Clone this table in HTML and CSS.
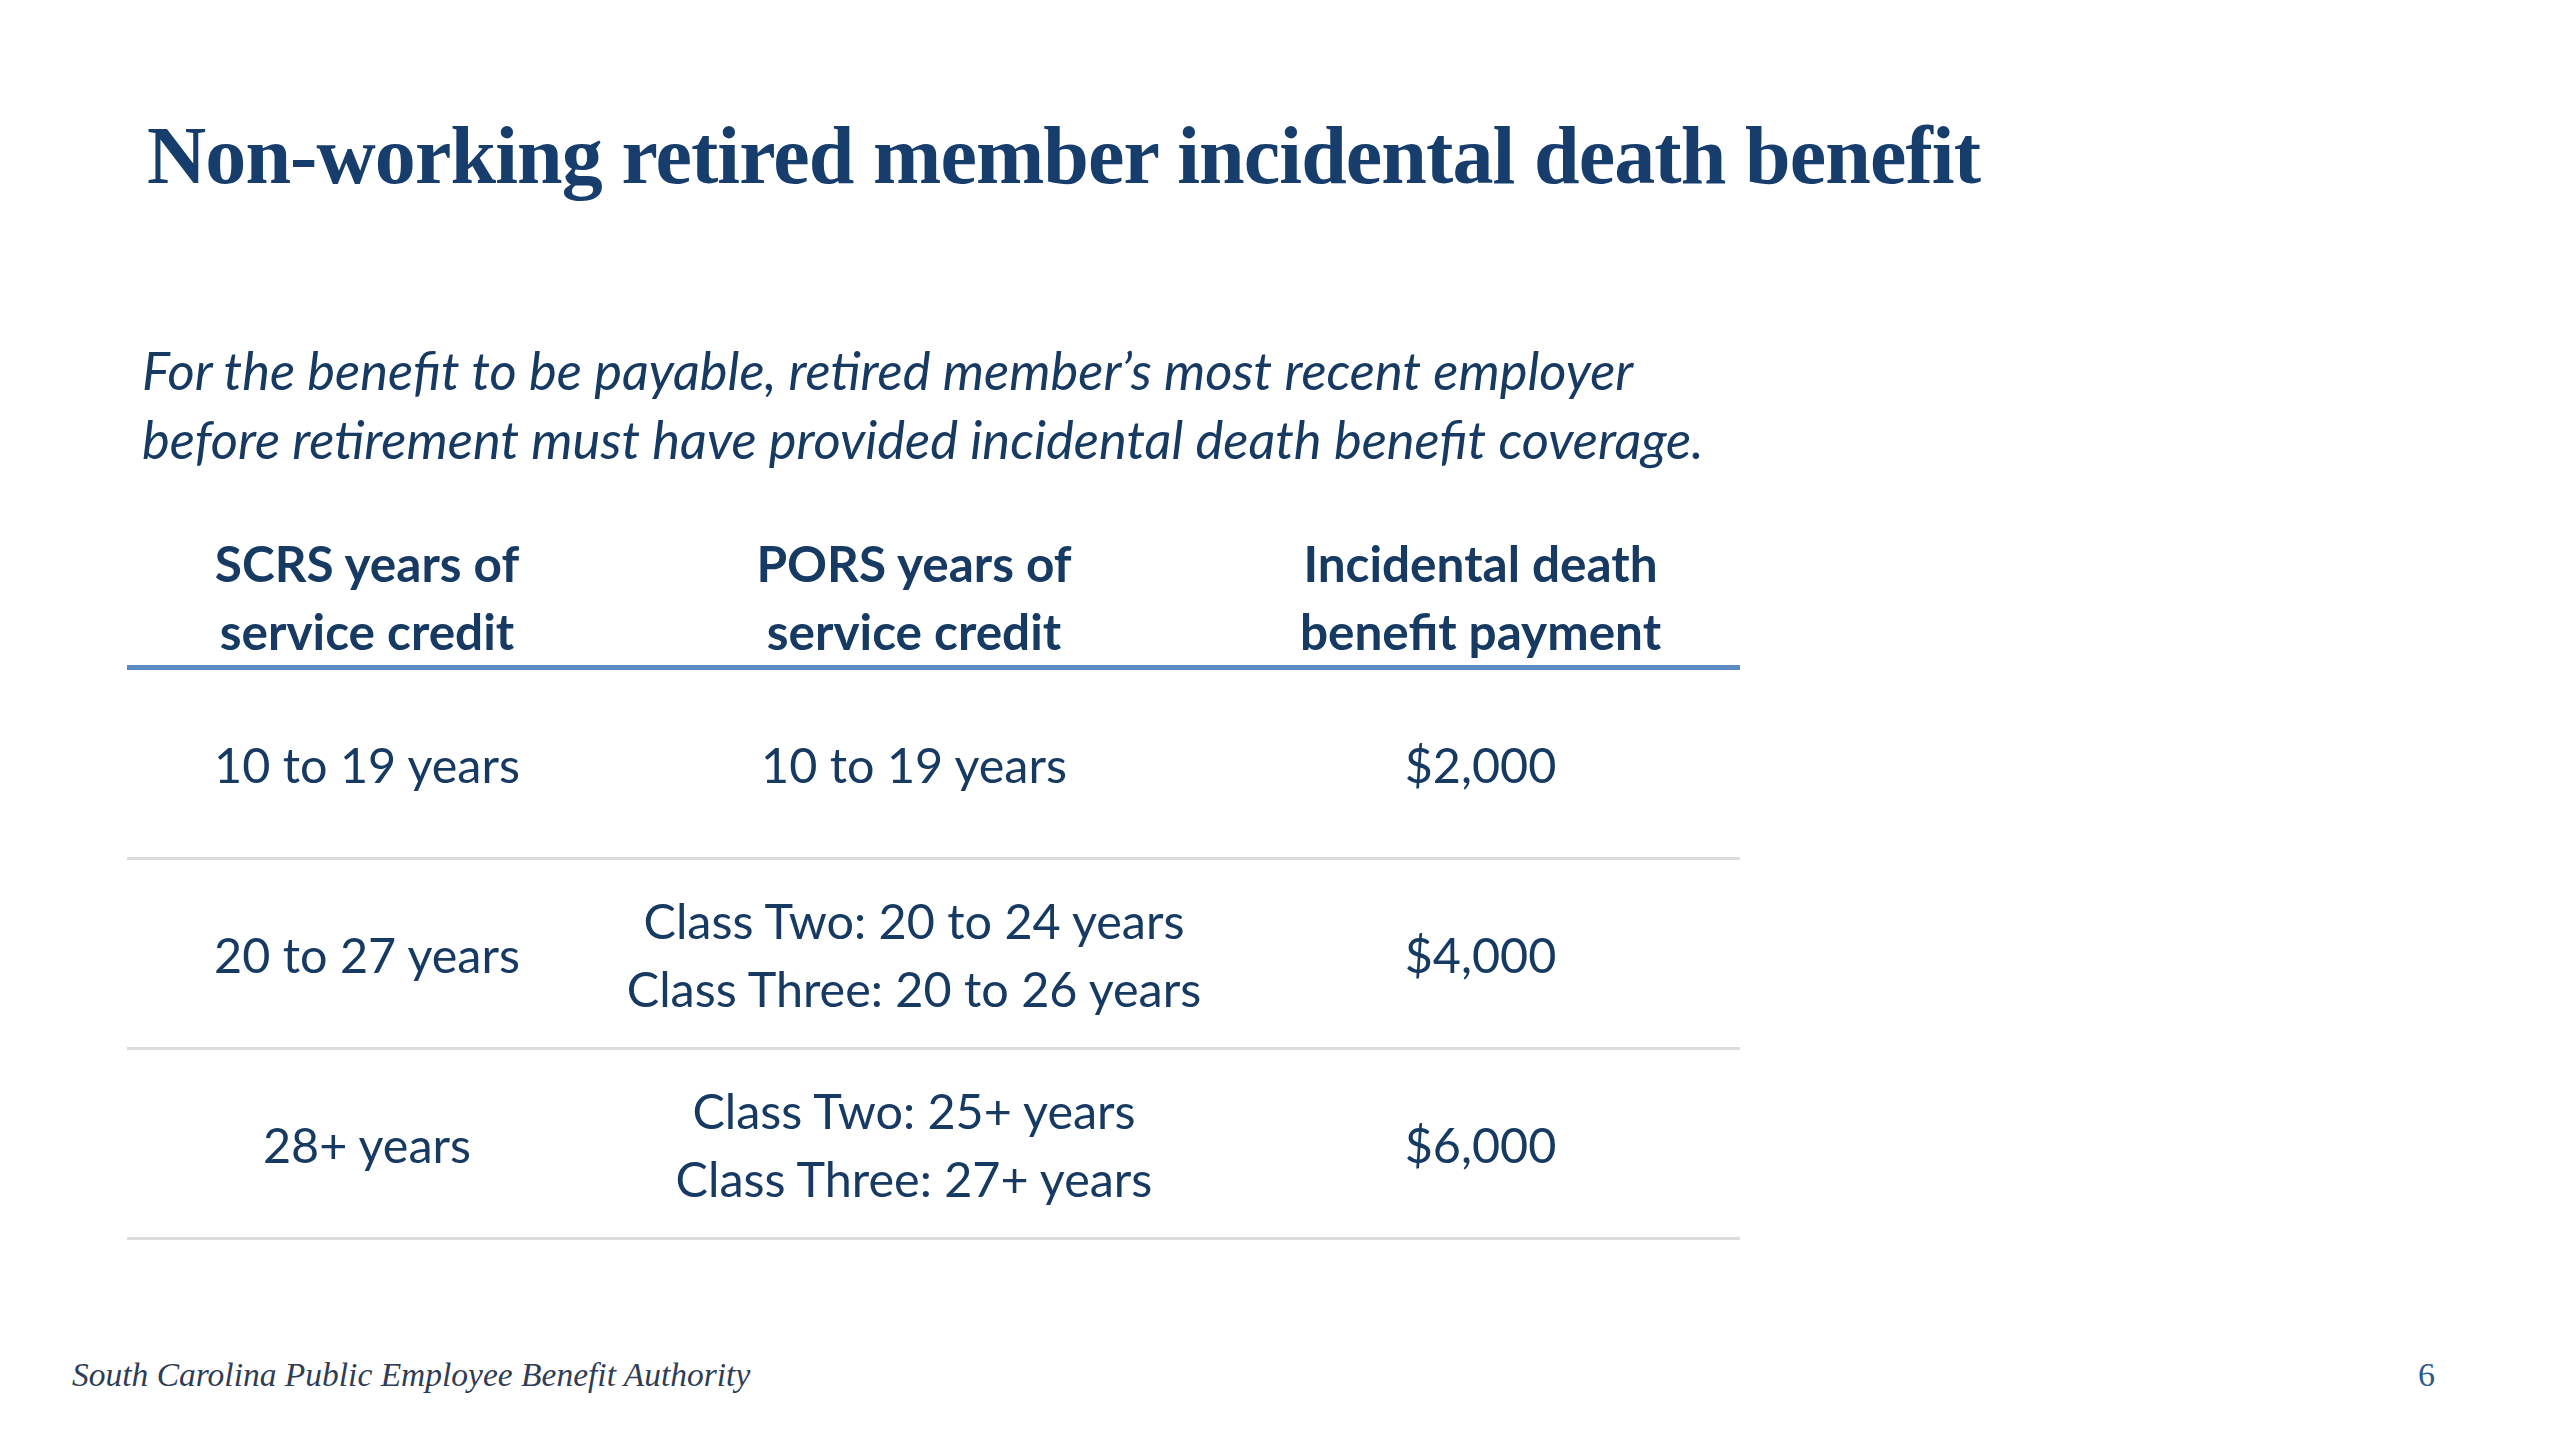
FILE: index.html
```html
<!DOCTYPE html>
<html lang="en">
<head>
<meta charset="utf-8">
<title>Non-working retired member incidental death benefit</title>
<link rel="stylesheet" href="styles.css">
</head>
<body>
<div class="slide">
  <h1 class="title">Non-working retired member incidental death benefit</h1>
  <p class="intro">For the benefit to be payable, retired member’s most recent employer<br>before retirement must have provided incidental death benefit coverage.</p>
  <table class="grid">
    <colgroup>
      <col class="c1"><col class="c2"><col class="c3">
    </colgroup>
    <thead>
      <tr>
        <th>SCRS years of<br>service credit</th>
        <th>PORS years of<br>service credit</th>
        <th>Incidental death<br>benefit payment</th>
      </tr>
    </thead>
    <tbody>
      <tr>
        <td>10 to 19 years</td>
        <td>10 to 19 years</td>
        <td>$2,000</td>
      </tr>
      <tr>
        <td>20 to 27 years</td>
        <td>Class Two: 20 to 24 years<br>Class Three: 20 to 26 years</td>
        <td>$4,000</td>
      </tr>
      <tr>
        <td>28+ years</td>
        <td>Class Two: 25+ years<br>Class Three: 27+ years</td>
        <td>$6,000</td>
      </tr>
    </tbody>
  </table>
  <footer class="foot">
    <span class="org">South Carolina Public Employee Benefit Authority</span>
    <span class="page">6</span>
  </footer>
</div>
</body>
</html>
```

FILE: styles.css
```css
html, body {
  margin: 0;
  padding: 0;
  background: #ffffff;
}

.slide {
  width: 2560px;
  height: 1440px;
  box-sizing: border-box;
  display: flex;
  flex-direction: column;
  align-items: flex-start;
  padding: 106px 0 45px 0;
  background: #ffffff;
}

.title {
  margin: 0 0 0 147px;
  font-family: "Liberation Serif", "Times New Roman", serif;
  font-weight: bold;
  font-size: 82px;
  letter-spacing: -0.9px;
  line-height: 100px;
  color: #173d6d;
  white-space: nowrap;
}

.intro {
  margin: 129px 0 0 142px;
  font-family: Lato, "Open Sans", sans-serif;
  font-style: italic;
  font-size: 52.5px;
  line-height: 69px;
  color: #173a63;
  white-space: nowrap;
}

.grid {
  margin: 56px 0 0 127px;
  width: 1613px;
  border-collapse: collapse;
  table-layout: fixed;
  font-family: Lato, "Open Sans", sans-serif;
  color: #173a63;
}

.c1 { width: 480px; }
.c2 { width: 614px; }
.c3 { width: 519px; }

.grid th {
  font-weight: bold;
  font-size: 49.5px;
  line-height: 68px;
  padding: 0;
  text-align: center;
  border-bottom: 5px solid #5b8bc2;
}

.grid td {
  font-size: 48.5px;
  line-height: 68px;
  height: 187px;
  padding: 0;
  text-align: center;
  vertical-align: middle;
  border-bottom: 3px solid #dcdcdc;
}

.foot {
  margin-top: auto;
  align-self: stretch;
  display: flex;
  justify-content: space-between;
  align-items: center;
  padding: 0 125px 0 72px;
  font-family: "Liberation Serif", "Times New Roman", serif;
  line-height: 40px;
}

.org {
  font-style: italic;
  font-size: 33.5px;
  color: #2f3d55;
}

.page {
  font-size: 34px;
  color: #2e5c8a;
}
```
